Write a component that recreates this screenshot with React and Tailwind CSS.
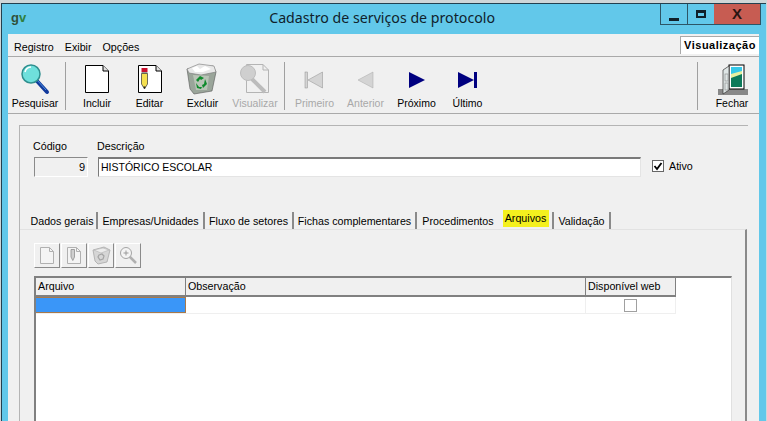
import React from 'react'

const FONT = "font-['Liberation_Sans',Arial,sans-serif]"

function Magnifier() {
  return (
    <svg width="30" height="32" viewBox="0 0 30 32">
      <line x1="17" y1="18" x2="27" y2="29" stroke="#123a9c" strokeWidth="4" strokeLinecap="round" />
      <line x1="17" y1="17" x2="26" y2="27" stroke="#4a90e0" strokeWidth="1" />
      <circle cx="11" cy="11" r="9" fill="#6fe0dc" stroke="#2f8f8f" strokeWidth="1.5" />
      <path d="M5 9a6.5 6.5 0 0 1 6-5" fill="none" stroke="#ffffff" strokeWidth="1.5" />
    </svg>
  )
}

function Page({ children }) {
  return (
    <svg width="26" height="30" viewBox="0 0 26 30">
      <path d="M1.5 1.5H19L24.5 7V28.5H1.5Z" fill="#ffffff" stroke="#000000" />
      <path d="M19 1.5V7H24.5" fill="#e0e0e0" stroke="#000000" />
      {children}
    </svg>
  )
}

function EditIcon() {
  return (
    <Page>
      <rect x="4.5" y="4" width="6" height="4" fill="#c8102e" />
      <rect x="4.5" y="8" width="6" height="1.5" fill="#999999" />
      <path d="M4.5 9.5H10.5V20L7.5 25L4.5 20Z" fill="#f5e050" stroke="#333333" strokeWidth="0.7" />
      <path d="M6.3 22.5L7.5 25L8.7 22.5Z" fill="#222222" />
    </Page>
  )
}

function TrashIcon() {
  return (
    <svg className="-ml-[3px]" width="32" height="32" viewBox="0 0 32 32">
      <path d="M2 6L28 3L31 9L27 28L9 31L5 26Z" fill="#9aa59a" stroke="#555555" strokeWidth="0.6" />
      <path d="M2 6L14 1L29 3L31 9L16 12L4 10Z" fill="#e8e8e8" stroke="#777777" strokeWidth="0.6" />
      <path d="M7 5L12 3L15 6L20 3L26 6L18 9L10 9Z" fill="#ffffff" />
      <path d="M8 12L24 13L22 27L11 27Z" fill="#b9c4b6" />
      <path d="M11 17L15 13L19 15L16 17L15 16L13 19ZM20 16L22 21L18 25L17 22L19 21ZM11 20L14 24L17 24L16 26L12 25Z" fill="#0f8a2c" />
    </svg>
  )
}

function ViewDisabledIcon() {
  return (
    <svg className="-ml-[2px]" width="32" height="32" viewBox="0 0 32 32">
      <path d="M8.5 1.5H25L30.5 7V29.5H8.5Z" fill="#f0f0f0" stroke="#b4b4b4" />
      <path d="M25 1.5V7H30.5" fill="none" stroke="#b4b4b4" />
      <line x1="14" y1="16" x2="27" y2="29" stroke="#bcbcbc" strokeWidth="4" />
      <circle cx="10" cy="10" r="7.5" fill="#cfcfcf" stroke="#bdbdbd" />
    </svg>
  )
}

// small disabled icons of the grid toolbar
function SmallNew() {
  return (
    <svg width="14" height="17" viewBox="0 0 14 17">
      <path d="M.5.5H9.5L13.5 4.5V16.5H.5Z" fill="#f4f4f4" stroke="#b0b0b0" />
      <path d="M9.5.5V4.5H13.5" fill="none" stroke="#b0b0b0" />
    </svg>
  )
}

function SmallEdit() {
  return (
    <svg width="14" height="17" viewBox="0 0 14 17">
      <path d="M.5.5H9.5L13.5 4.5V16.5H.5Z" fill="#f4f4f4" stroke="#b0b0b0" />
      <path d="M9.5.5V4.5H13.5" fill="none" stroke="#b0b0b0" />
      <path d="M4 2.5H7.5V10L5.8 13.5L4 10Z" fill="#cfcfcf" stroke="#8e8e8e" strokeWidth="0.8" />
    </svg>
  )
}

function SmallTrash() {
  return (
    <svg width="19" height="19" viewBox="0 0 19 19">
      <path d="M1 4L12 1L18 4L15 16L6 18L3 15Z" fill="#d6d6d6" stroke="#a8a8a8" strokeWidth="0.8" />
      <path d="M2 4L11 2L17 4L9 7Z" fill="#ececec" stroke="#b4b4b4" strokeWidth="0.6" />
      <path d="M7 9L10 8L12 10L11 13L8 14L6 11Z" fill="none" stroke="#a4a4a4" strokeWidth="1.2" />
    </svg>
  )
}

function SmallSearch() {
  return (
    <svg width="19" height="19" viewBox="0 0 19 19">
      <line x1="10" y1="10" x2="17" y2="17" stroke="#b0b0b0" strokeWidth="2.5" />
      <circle cx="7" cy="7" r="5.5" fill="#f4f4f4" stroke="#a4a4a4" />
      <path d="M4.5 7H9.5M7 4.5V9.5" stroke="#9a9a9a" />
    </svg>
  )
}

function NavIcon({ kind, color, edge }) {
  return (
    <svg className="mt-[2px]" width="24" height="22" viewBox="0 0 24 22">
      {kind === 'first' && (
        <>
          <rect x="2" y="3" width="2.5" height="16" fill={color} stroke={edge} strokeWidth="0.5" />
          <path d="M19.5 3V19L5 11Z" fill={color} stroke={edge} strokeWidth="0.5" />
        </>
      )}
      {kind === 'prev' && <path d="M19 3V19L4 11Z" fill={color} stroke={edge} strokeWidth="0.5" />}
      {kind === 'next' && <path d="M4 3V19L20 11Z" fill={color} />}
      {kind === 'last' && (
        <>
          <path d="M2 3V19L18 11Z" fill={color} />
          <rect x="18" y="3" width="3" height="16" fill={color} />
        </>
      )}
    </svg>
  )
}

function DoorIcon() {
  return (
    <svg width="32" height="32" viewBox="0 0 32 32">
      <rect x="2" y="26" width="30" height="6" fill="#666666" opacity="0.75" />
      <rect x="13" y="2" width="15" height="24" fill="#ffffff" stroke="#000000" />
      <rect x="15" y="4" width="11" height="8" fill="#35c8e8" />
      <path d="M15 11L26 8V20H15Z" fill="#e8f0a0" />
      <path d="M15 15L26 11V24H15Z" fill="#0d7a5a" />
      <path d="M13 3L7 7V31L13 27Z" fill="#dfe6e6" stroke="#333333" strokeWidth="0.7" />
      <rect x="9" y="11" width="3" height="7" fill="none" stroke="#888888" strokeWidth="0.6" />
      <rect x="9" y="20" width="3" height="7" fill="none" stroke="#888888" strokeWidth="0.6" />
    </svg>
  )
}

function ToolButton({ label, disabled, icon, width = 'w-[52px]' }) {
  return (
    <div className={`${width} flex h-[50px] flex-col items-center`}>
      <div className="flex h-[33px] items-center justify-center">{icon}</div>
      <span className={`mt-[2px] text-[10.5px] leading-[13px] ${disabled ? 'text-[#a8a8a8]' : 'text-black'}`}>{label}</span>
    </div>
  )
}

function Sep({ className = '' }) {
  return <div className={`h-[48px] w-[2px] border-l border-[#a0a0a0] ${className}`} />
}

function Tab({ label, width, highlight, noEdge }) {
  return (
    <div className={`${width} flex h-[17px] items-center justify-center pt-[1px] text-[10.7px] ${noEdge ? '' : 'border-r-2 border-[#8a8a8a]'}`}>
      {highlight ? (
        <span className="mb-[6px] flex h-[17px] w-[46px] items-center justify-center bg-[#f4f01e]">{label}</span>
      ) : label}
    </div>
  )
}

function SmallButton({ children }) {
  return (
    <div className="flex h-[25px] w-[26px] items-center justify-center border border-white border-r-[#8a8a8a] border-b-[#8a8a8a] bg-[#f0f0f0]">
      {children}
    </div>
  )
}

export default function App() {
  return (
    <div className={`${FONT} h-[421px] w-[767px] overflow-hidden bg-[#cfd6d8] pl-[1px] pt-[3px] text-black`}>
      <div className="h-[418px] w-[765px] border-l border-t border-[#23404f] bg-[#62c8ea] pl-[6px] pr-[7px]">
        {/* title bar */}
        <div className="flex h-[30px]">
          <span className="ml-[3px] mt-[7px] text-[13px] font-bold leading-[13px] text-[#30503a]">g<span className="text-[#2f7f40]">v</span></span>
          <div className="mt-[2px] flex-1 pl-[243px] font-['Noto_Sans',sans-serif] text-[14.2px] leading-[24px] text-[#10222c]">
            Cadastro de serviços de protocolo
          </div>
          <div className="-mr-[2px] flex h-[21px] border border-t-0 border-[#2d5566]">
            <div className="flex w-[27px] items-end justify-center border-r border-[#2d5566] pb-[3px]">
              <div className="h-[3px] w-[10px] bg-[#10202a]" />
            </div>
            <div className="flex w-[26px] items-center justify-center">
              <div className="h-[8px] w-[10px] border-2 border-t-[3px] border-[#10202a]" />
            </div>
            <div className="flex w-[46px] items-center justify-center bg-[#c75c52] text-[15px] font-bold text-[#2a1512]">X</div>
          </div>
        </div>

        <div className="h-[388px] bg-[#f0f0f0]">
          {/* menu bar */}
          <div className="flex h-[23px] justify-between border-b border-[#a9a9a9]">
            <div className="flex gap-[11px] pl-[6px] pt-[7px] text-[10.7px] leading-[13px]">
              <span>Registro</span>
              <span>Exibir</span>
              <span>Opções</span>
            </div>
            <div className="mt-[2px] flex h-[18px] w-[79px] items-center justify-center border-l border-t border-[#a9a9a9] bg-white text-[11px] font-bold tracking-[0.5px]">
              Visualização
            </div>
          </div>

          {/* toolbar */}
          <div className="flex h-[57px] items-start border-b border-[#a9a9a9] pl-[2px] pr-[1px] pt-[5px]">
            <ToolButton label="Pesquisar" width="w-[50px]" icon={<Magnifier />} />
            <Sep className="ml-[5px] mr-[4px]" />
            <ToolButton label="Incluir" icon={<Page />} />
            <ToolButton label="Editar" icon={<EditIcon />} width="w-[53px]" />
            <ToolButton label="Excluir" icon={<TrashIcon />} width="w-[53px]" />
            <ToolButton label="Visualizar" disabled icon={<ViewDisabledIcon />} />
            <Sep className="ml-[3px] mr-[3px]" />
            <ToolButton label="Primeiro" disabled width="w-[51px]" icon={<NavIcon kind="first" color="#d4d4d4" edge="#8e8e8e" />} />
            <ToolButton label="Anterior" disabled width="w-[51px]" icon={<NavIcon kind="prev" color="#d4d4d4" edge="#a8a8a8" />} />
            <ToolButton label="Próximo" width="w-[51px]" icon={<NavIcon kind="next" color="#000080" />} />
            <ToolButton label="Último" width="w-[51px]" icon={<NavIcon kind="last" color="#000080" />} />
            <div className="flex-1" />
            <Sep className="mr-[7px]" />
            <ToolButton label="Fechar" icon={<DoorIcon />} />
          </div>

          {/* group */}
          <div className="mx-[11px] mt-[11px] h-[297px] border-l border-t border-[#b4b4b4] pl-[14px]">
            <div className="flex h-[86px] items-start pt-[14px]">
              <div className="w-[64px]">
                <div className="-ml-[1px] text-[10.7px] leading-[13px]">Código</div>
                <div className="mt-[4px] flex h-[20px] w-[54px] items-center justify-end border border-[#8a8a8a] border-b-white border-r-white bg-[#f0f0f0] pr-[2px] text-[11px]">9</div>
              </div>
              <div className="w-[554px]">
                <div className="-ml-[1px] text-[10.7px] leading-[13px]">Descrição</div>
                <div className="mt-[4px] flex h-[20px] w-[543px] items-center border border-t-2 border-[#7a7a7a] border-b-[#e4e4e4] border-r-[#e4e4e4] bg-white pl-[2px] text-[10.5px]">HISTÓRICO ESCOLAR</div>
              </div>
              <div className="mt-[18px] flex items-center gap-[5px]">
                <div className="flex h-[12px] w-[12px] items-center justify-center border border-[#666666] bg-white">
                  <svg width="10" height="10" viewBox="0 0 10 10"><path d="M1.5 5L4 8L8.5 2" fill="none" stroke="#000000" strokeWidth="1.8" /></svg>
                </div>
                <span className="text-[10.7px]">Ativo</span>
              </div>
            </div>

            {/* tabs */}
            <div className="-ml-[6px] flex">
              <Tab label="Dados gerais" width="w-[70px]" />
              <Tab label="Empresas/Unidades" width="w-[107px]" />
              <Tab label="Fluxo de setores" width="w-[89px]" />
              <Tab label="Fichas complementares" width="w-[123px]" />
              <Tab label="Procedimentos" width="w-[82px]" noEdge />
              <Tab label="Arquivos" width="w-[55px]" highlight />
              <Tab label="Validação" width="w-[57px]" />
            </div>

            {/* tab page */}
            <div className="-ml-[14px] h-[300px] w-[727px] border-r-2 border-t border-[#8a8a8a] border-t-[#e2e2e2] pl-[14px] pt-[13px]">
              <div className="flex gap-[1px]">
                <SmallButton><SmallNew /></SmallButton>
                <SmallButton><SmallEdit /></SmallButton>
                <SmallButton><SmallTrash /></SmallButton>
                <SmallButton><SmallSearch /></SmallButton>
              </div>
              <div className="mt-[8px] h-[200px] w-[698px] border-l-2 border-r border-t-2 border-[#808080] border-r-[#e0e0e0] bg-white">
                <div className="flex h-[19px] w-[640px] border-b-2 border-[#808080] bg-[#f0f0f0] text-[10.7px] leading-[17px]">
                  <div className="w-[150px] border-r border-[#808080] pl-[2px]">Arquivo</div>
                  <div className="w-[400px] border-r border-[#808080] pl-[2px]">Observação</div>
                  <div className="w-[90px] border-r border-[#808080] pl-[2px]">Disponível web</div>
                </div>
                <div className="flex h-[17px] w-[640px] border-b border-[#efefef]">
                  <div className="w-[150px] border border-l-0 border-[#a8794a] bg-[#3a96f8]" />
                  <div className="w-[400px] border-r border-[#efefef]" />
                  <div className="flex w-[90px] items-center justify-center border-r border-[#efefef]">
                    <div className="h-[13px] w-[13px] border border-[#a0a0a0]" />
                  </div>
                </div>
              </div>
            </div>
          </div>
        </div>
      </div>
    </div>
  )
}
